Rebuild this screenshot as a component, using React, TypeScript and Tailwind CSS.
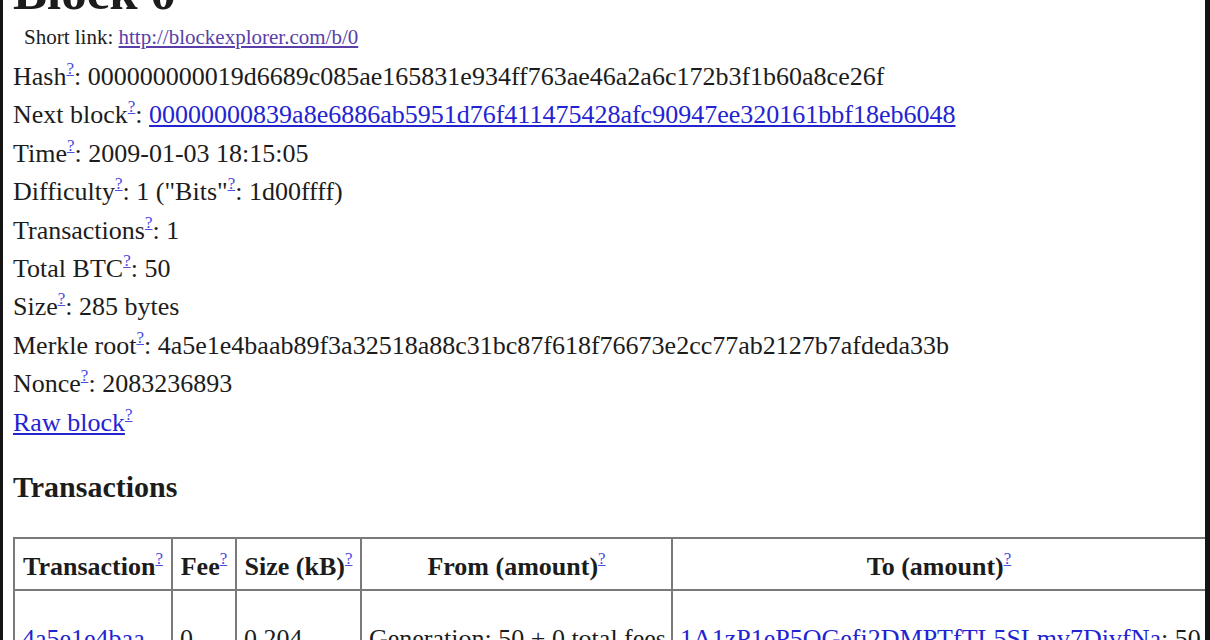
import React from "react";

// ─── Help mark ────────────────────────────────────────────────────────────────

function Q() {
  return (
    <sup className="text-[17px] top-[-11px] font-normal">
      <a href="#" className="text-[#4a4ae0] underline">?</a>
    </sup>
  );
}

function Row({ label, children }: { label: string; children?: React.ReactNode }) {
  return (
    <div className="leading-[38.4px] whitespace-nowrap">
      {label}
      <Q />: {children}
    </div>
  );
}

const link = "text-[#2323d2] underline";
const cell = "border-2 border-[#7a7a7a] px-[7px] pt-[33px] pb-[20px] align-top whitespace-nowrap";

// ─── Page ─────────────────────────────────────────────────────────────────────

export default function App() {
  return (
    <div
      className="w-[1210px] h-[640px] overflow-hidden bg-white border-l-[3px] border-r-[5px] border-[#151515] text-[#1c1c1c]"
      style={{ fontFamily: '"Liberation Serif", "Times New Roman", serif' }}
    >
      <div className="pl-[10px]">
        <h1 className="text-[51px] font-bold leading-none mt-[-33px]">Block 0</h1>

        <div className="text-[21px] leading-[24px] mt-[7px] pl-[11px]">
          Short link: <a href="#" className="text-[#5a3ea8] underline">http://blockexplorer.com/b/0</a>
        </div>

        <div className="text-[26px] mt-[9px]">
          <Row label="Hash">000000000019d6689c085ae165831e934ff763ae46a2a6c172b3f1b60a8ce26f</Row>
          <Row label="Next block">
            <a href="#" className={link}>00000000839a8e6886ab5951d76f411475428afc90947ee320161bbf18eb6048</a>
          </Row>
          <Row label="Time">2009-01-03 18:15:05</Row>
          <div className="leading-[38.4px] whitespace-nowrap">
            Difficulty<Q />: 1 ("Bits"<Q />: 1d00ffff)
          </div>
          <Row label="Transactions">1</Row>
          <Row label="Total BTC">50</Row>
          <Row label="Size">285 bytes</Row>
          <Row label="Merkle root">4a5e1e4baab89f3a32518a88c31bc87f618f76673e2cc77ab2127b7afdeda33b</Row>
          <Row label="Nonce">2083236893</Row>
          <div className="leading-[38.4px]">
            <a href="#" className={link}>Raw block</a>
            <Q />
          </div>
        </div>

        <h3 className="text-[30px] font-bold leading-none mt-[30px]">Transactions</h3>

        <table className="table-fixed border-collapse w-[1192px] mt-[35px] text-[26px] leading-[29px]">
          <colgroup>
            <col className="w-[158px]" />
            <col className="w-[64px]" />
            <col className="w-[125px]" />
            <col className="w-[311px]" />
            <col className="w-[534px]" />
          </colgroup>
          <thead>
            <tr>
              {["Transaction", "Fee", "Size (kB)", "From (amount)", "To (amount)"].map((h) => (
                <th
                  key={h}
                  className="border-2 border-[#7a7a7a] px-[6px] pt-[13px] pb-[8px] align-top text-center font-bold whitespace-nowrap"
                >
                  {h}
                  <Q />
                </th>
              ))}
            </tr>
          </thead>
          <tbody>
            <tr>
              <td className={cell}>
                <a href="#" className={link}>4a5e1e4baa...</a>
              </td>
              <td className={cell}>0</td>
              <td className={cell}>0.204</td>
              <td className={cell}>Generation: 50 + 0 total fees</td>
              <td className={cell}>
                <a href="#" className={link}>1A1zP1eP5QGefi2DMPTfTL5SLmv7DivfNa</a>: 50
              </td>
            </tr>
          </tbody>
        </table>
      </div>
    </div>
  );
}
